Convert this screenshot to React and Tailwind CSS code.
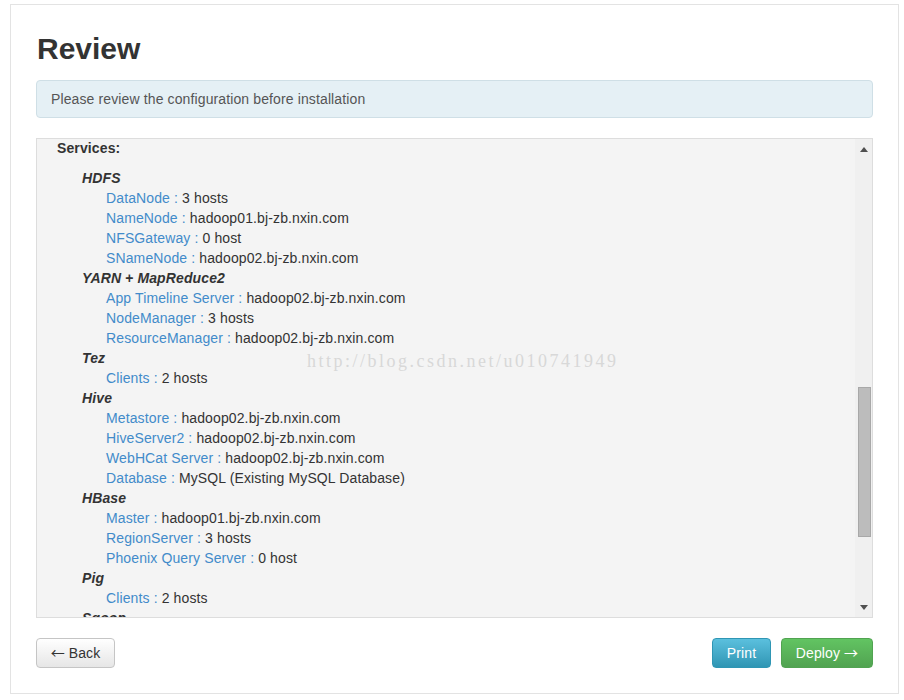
import React from 'react';

const services = [
    {
        name: 'HDFS',
        items: [
            ['DataNode', '3 hosts'],
            ['NameNode', 'hadoop01.bj-zb.nxin.com'],
            ['NFSGateway', '0 host'],
            ['SNameNode', 'hadoop02.bj-zb.nxin.com'],
        ],
    },
    {
        name: 'YARN + MapReduce2',
        items: [
            ['App Timeline Server', 'hadoop02.bj-zb.nxin.com'],
            ['NodeManager', '3 hosts'],
            ['ResourceManager', 'hadoop02.bj-zb.nxin.com'],
        ],
    },
    { name: 'Tez', items: [['Clients', '2 hosts']] },
    {
        name: 'Hive',
        items: [
            ['Metastore', 'hadoop02.bj-zb.nxin.com'],
            ['HiveServer2', 'hadoop02.bj-zb.nxin.com'],
            ['WebHCat Server', 'hadoop02.bj-zb.nxin.com'],
            ['Database', 'MySQL (Existing MySQL Database)'],
        ],
    },
    {
        name: 'HBase',
        items: [
            ['Master', 'hadoop01.bj-zb.nxin.com'],
            ['RegionServer', '3 hosts'],
            ['Phoenix Query Server', '0 host'],
        ],
    },
    { name: 'Pig', items: [['Clients', '2 hosts']] },
    { name: 'Sqoop', items: [['Clients', '2 hosts']] },
];

const arrowFont = { fontFamily: '"Noto Sans CJK SC", "DejaVu Sans", sans-serif' };

const Review = () => {
    return (
        <div className="bg-white pt-[4px] pl-[10px] pr-[5px] pb-[5px]" style={{ fontFamily: '"Liberation Sans", Arial, sans-serif' }}>
            <div className="border border-[#e3e3e3] px-[25px] pt-[24px] pb-[25px]">
                <h2 className="text-[30px] leading-[40px] font-bold text-[#333] pl-[1px]">Review</h2>

                <div className="mt-[11px] rounded-[4px] border border-[#cfdfe6] bg-[#e5f0f5] px-[14px] py-[8px] text-[14px] leading-[20px] tracking-[0.12px] text-[#555]">
                    Please review the configuration before installation
                </div>

                <div className="relative mt-[20px] h-[480px] border border-[#dddddd] bg-[#f4f4f4] flex overflow-hidden">
                    <div className="flex-1 pl-[20px] -mt-[1px] text-[14px] leading-[20px] tracking-[0.12px] text-[#333]">
                        <div className="font-bold">Services:</div>
                        <div className="mt-[10px] pl-[25px]">
                            {services.map((s) => (
                                <div key={s.name}>
                                    <div className="font-bold italic">{s.name}</div>
                                    {s.items.map(([k, v]) => (
                                        <div key={k} className="pl-[24px]">
                                            <span className="text-[#428bca]">{k} :</span> {v}
                                        </div>
                                    ))}
                                </div>
                            ))}
                        </div>
                    </div>

                    {/* scrollbar */}
                    <div className="w-[17px] bg-[#f0f0f0] flex flex-col items-center">
                        <div className="h-[20px] flex items-center justify-center pl-[1px]">
                            <svg width="8" height="5" viewBox="0 0 8 5"><path d="M4 0 L8 5 L0 5 Z" fill="#505050" /></svg>
                        </div>
                        <div className="h-[228px]" />
                        <div className="w-[13px] h-[150px] bg-[#bcbcbc] border border-[#a8a8a8] ml-[1px]" />
                        <div className="flex-1" />
                        <div className="h-[20px] flex items-center justify-center pl-[1px]">
                            <svg width="8" height="5" viewBox="0 0 8 5"><path d="M0 0 L8 0 L4 5 Z" fill="#505050" /></svg>
                        </div>
                    </div>

                    <div
                        className="absolute left-[270px] top-[210px] text-[18px] leading-[24px] tracking-[2.5px] text-[#d8d8d8] pointer-events-none"
                        style={{ fontFamily: '"Liberation Serif", serif' }}
                    >
                        http://blog.csdn.net/u010741949
                    </div>
                </div>

                <div className="mt-[20px] flex items-center">
                    <button className="w-[79px] h-[30px] rounded-[4px] border border-[#c5c5c5] bg-gradient-to-b from-white to-[#e6e6e6] text-[14px] text-[#333] tracking-[0.12px]">
                        <span style={arrowFont}>←</span> Back
                    </button>
                    <div className="flex-1" />
                    <button className="w-[59px] h-[30px] rounded-[4px] border border-[#2f96b4] bg-gradient-to-b from-[#5bc0de] to-[#2f96b4] text-[14px] text-white tracking-[0.12px]">
                        Print
                    </button>
                    <button className="ml-[10px] w-[92px] h-[30px] rounded-[4px] border border-[#51a351] bg-gradient-to-b from-[#62c462] to-[#51a351] text-[14px] text-white tracking-[0.12px]">
                        Deploy <span style={arrowFont}>→</span>
                    </button>
                </div>
            </div>
        </div>
    );
};

export default function App() {
    return <Review />;
}
